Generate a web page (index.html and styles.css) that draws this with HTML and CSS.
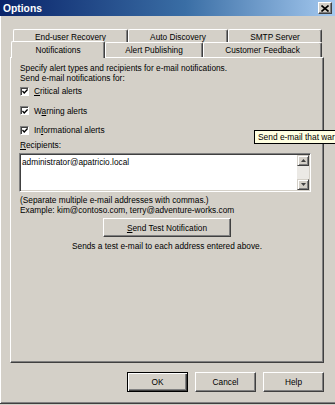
FILE: index.html
```html
<!DOCTYPE html>
<html lang="en">
<head>
    <meta charset="UTF-8">
    <title>Options</title>
    <link rel="stylesheet" href="styles.css">
</head>
<body>
    <div class="window">
        <div class="titlebar">
            <span class="title">Options</span>
            <span class="close">
                <svg width="8" height="7" viewBox="0 0 8 7"><path d="M0.5 0.5 L7.5 6.5 M7.5 0.5 L0.5 6.5" stroke="#000" stroke-width="1.6" fill="none"/></svg>
            </span>
        </div>
        <div class="client">
            <div class="tabrow tabrow-back">
                <div class="tab tab-recovery">End-user Recovery</div>
                <div class="tab tab-discovery">Auto Discovery</div>
                <div class="tab tab-smtp">SMTP Server</div>
            </div>
            <div class="tabrow tabrow-front">
                <div class="tab tab-active tab-notify">Notifications</div>
                <div class="tab tab-publish">Alert Publishing</div>
                <div class="tab tab-feedback">Customer Feedback</div>
            </div>
            <div class="panel">
                <div class="line">Specify alert types and recipients for e-mail notifications.</div>
                <div class="line">Send e-mail notifications for:</div>
                <div class="checks">
                    <div class="check">
                        <span class="box"><svg width="7" height="7" viewBox="0 0 7 7"><path d="M0.5 3 L2.6 5.2 L6.5 1" stroke="#000" stroke-width="1.6" fill="none"/></svg></span>
                        <span><u>C</u>ritical alerts</span>
                    </div>
                    <div class="check">
                        <span class="box"><svg width="7" height="7" viewBox="0 0 7 7"><path d="M0.5 3 L2.6 5.2 L6.5 1" stroke="#000" stroke-width="1.6" fill="none"/></svg></span>
                        <span>W<u>a</u>rning alerts</span>
                    </div>
                    <div class="check">
                        <span class="box"><svg width="7" height="7" viewBox="0 0 7 7"><path d="M0.5 3 L2.6 5.2 L6.5 1" stroke="#000" stroke-width="1.6" fill="none"/></svg></span>
                        <span>In<u>f</u>ormational alerts</span>
                    </div>
                </div>
                <div class="line field-label"><u>R</u>ecipients:</div>
                <div class="memo">
                    <div class="memo-text">administrator@apatricio.local</div>
                    <div class="scroll">
                        <div class="scroll-btn"><svg width="5" height="3" viewBox="0 0 5 3"><path d="M0 3 L2.5 0 L5 3 Z" fill="#404040"/></svg></div>
                        <div class="scroll-track"></div>
                        <div class="scroll-btn"><svg width="5" height="3" viewBox="0 0 5 3"><path d="M0 0 L2.5 3 L5 0 Z" fill="#404040"/></svg></div>
                    </div>
                </div>
                <div class="line hint">(Separate multiple e-mail addresses with commas.)</div>
                <div class="line">Example: kim@contoso.com, terry@adventure-works.com</div>
                <button class="btn btn-send"><u>S</u>end Test Notification</button>
                <div class="line note">Sends a test e-mail to each address entered above.</div>
            </div>
            <div class="buttons">
                <button class="btn btn-default">OK</button>
                <button class="btn">Cancel</button>
                <button class="btn">Help</button>
            </div>
        </div>
        <div class="tooltip">Send e-mail that war</div>
    </div>
</body>
</html>
```

FILE: styles.css
```css
*{
    margin:0;
    padding:0;
    box-sizing:border-box;
}
body{
    width:335px;
    height:405px;
    overflow:hidden;
    background:#d4d0c8;
    font-family:"Liberation Sans", Arial, sans-serif;
    font-size:8.3px;
    color:#000;
}
u{
    text-decoration:underline;
    text-underline-offset:1px;
}
.window{
    position:relative;
    width:337px;
    height:404px;
    display:flex;
    flex-direction:column;
    border-bottom:1px solid #404040;
}
.titlebar{
    height:16px;
    flex:none;
    display:flex;
    align-items:center;
    justify-content:space-between;
    padding:0 5px 0 3px;
    background:linear-gradient(to right, #0a246a 0%, #3a6ea5 55%, #a6caf0 100%);
}
.title{
    color:#fff;
    font-weight:bold;
    font-size:10.3px;
}
.close{
    width:14px;
    height:12px;
    display:flex;
    align-items:center;
    justify-content:center;
    background:#d4d0c8;
    border:1px solid;
    border-color:#fff #404040 #404040 #fff;
    box-shadow:inset -1px -1px #808080;
}
.client{
    flex:1;
    display:flex;
    flex-direction:column;
    padding:13px 13px 0 10px;
    box-shadow:inset 1px 0 #fff, inset 0 -1px #808080;
}

/* tabs */
.tabrow{
    display:flex;
    align-items:flex-end;
    flex:none;
}
.tabrow-back{
    height:13px;
    margin-left:3px;
}
.tabrow-front{
    height:16px;
    margin-left:1px;
    margin-top:-1px;
}
.tab{
    display:flex;
    align-items:center;
    justify-content:center;
    background:#d4d0c8;
    border:1px solid;
    border-color:#fff #404040 transparent #fff;
    border-bottom:none;
    border-radius:2px 2px 0 0;
    box-shadow:inset -1px 0 #808080;
    white-space:nowrap;
}
.tabrow-back .tab{
    height:13px;
    padding-top:2px;
}
.tabrow-front .tab{
    height:15px;
}
.tabrow-front .tab-active{
    height:17px;
    margin-bottom:-1px;
    position:relative;
    z-index:1;
    padding-bottom:1px;
}
.tab-recovery{ width:115px; }
.tab-discovery{ width:100px; }
.tab-smtp{ width:94px; }
.tab-notify{ width:94px; }
.tab-publish{ width:98px; }
.tab-feedback{ width:119px; }

/* page */
.panel{
    height:306px;
    flex:none;
    display:flex;
    flex-direction:column;
    padding:5px 9px 0 9px;
    border:1px solid;
    border-color:#fff #404040 #404040 #fff;
    box-shadow:inset -1px -1px #808080;
}
.line{
    height:10px;
    line-height:10px;
    white-space:nowrap;
}
.checks{
    display:flex;
    flex-direction:column;
    gap:3.5px;
}
.check{
    height:16px;
    display:flex;
    align-items:center;
    gap:5px;
}
.box{
    width:9px;
    height:9px;
    display:flex;
    align-items:center;
    justify-content:center;
    background:#fff;
    border:1px solid;
    border-color:#808080 #fff #fff #808080;
    box-shadow:inset 1px 1px #404040;
}
.box svg{
    margin:1px 0 0 1px;
}
.field-label{
    margin-top:2px;
}
.memo{
    width:292px;
    height:39px;
    margin:3px 0 0 -1px;
    display:flex;
    background:#fff;
    border:1px solid;
    border-color:#808080 #fff #fff #808080;
    box-shadow:inset 1px 1px #404040, inset -1px -1px #d4d0c8;
    padding:1px;
}
.memo-text{
    flex:1;
    padding:2px 1px;
    line-height:10px;
}
.scroll{
    width:12px;
    display:flex;
    flex-direction:column;
}
.scroll-btn{
    height:11px;
    display:flex;
    align-items:center;
    justify-content:center;
    background:#d4d0c8;
    border:1px solid;
    border-color:#d4d0c8 #404040 #404040 #d4d0c8;
    box-shadow:inset 1px 1px #fff, inset -1px -1px #808080;
}
.scroll-track{
    flex:1;
    background:#ebe9e5;
}
.hint{
    margin-top:3px;
}
.btn{
    width:61px;
    height:20px;
    display:flex;
    align-items:center;
    justify-content:center;
    font:inherit;
    color:#000;
    background:#d4d0c8;
    border:1px solid;
    border-color:#fff #404040 #404040 #fff;
    box-shadow:inset -1px -1px #808080;
}
.btn-send{
    width:128px;
    height:19px;
    margin-top:3px;
    align-self:center;
}
.note{
    margin-top:4px;
    text-align:center;
}
.buttons{
    display:flex;
    justify-content:flex-end;
    gap:7px;
    margin-top:9px;
}
.btn-default{
    border-color:#000;
    box-shadow:inset 1px 1px #fff, inset -1px -1px #404040, inset -2px -2px #808080;
}
.tooltip{
    position:absolute;
    left:254px;
    top:130px;
    width:83px;
    height:14px;
    padding:0 0 0 3px;
    line-height:12px;
    font-size:8.4px;
    white-space:nowrap;
    overflow:hidden;
    background:#ffffe1;
    border:1px solid #000;
    z-index:2;
}
```
